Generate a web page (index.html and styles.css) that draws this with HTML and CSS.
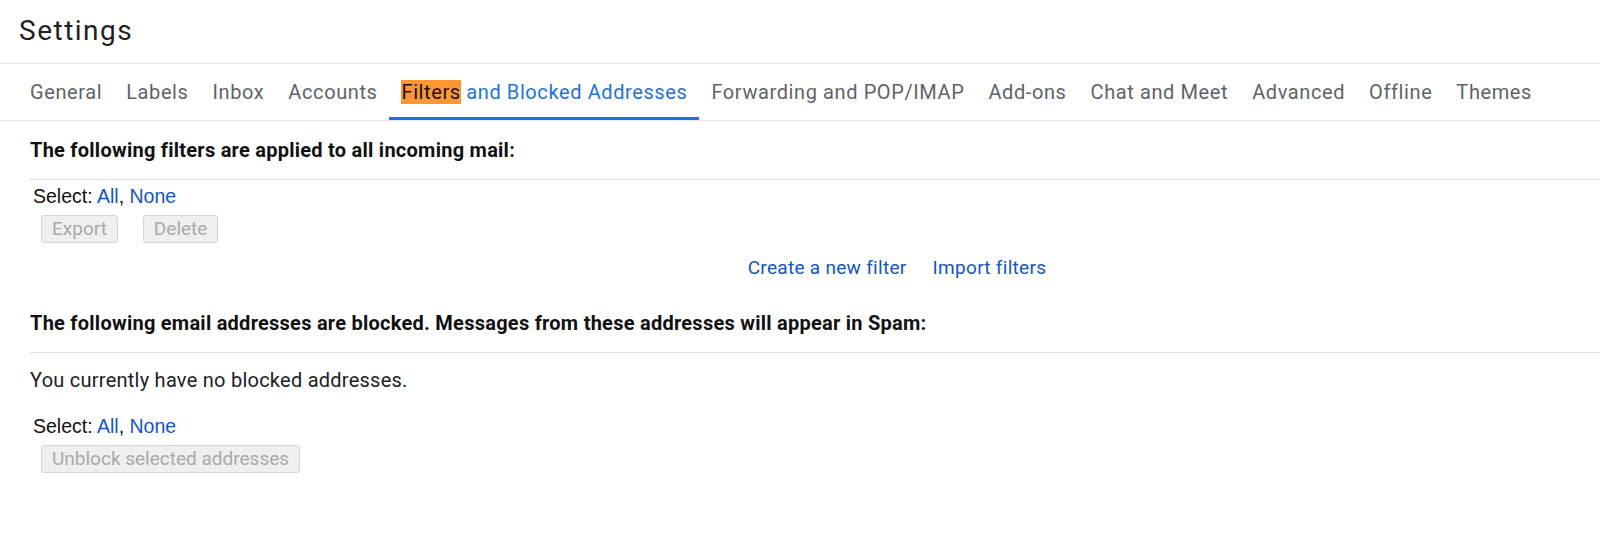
FILE: index.html
```html
<!DOCTYPE html>
<html>
<head>
<meta charset="utf-8">
<link rel="stylesheet" href="styles.css">
</head>
<body>
<div class="header"><h1 class="title">Settings</h1></div>
<nav class="tabs">
  <a class="tab"><span>General</span></a>
  <a class="tab"><span>Labels</span></a>
  <a class="tab"><span>Inbox</span></a>
  <a class="tab"><span>Accounts</span></a>
  <a class="tab active"><span><span class="hl">Filters</span> and Blocked Addresses</span></a>
  <a class="tab"><span>Forwarding and POP/IMAP</span></a>
  <a class="tab"><span>Add-ons</span></a>
  <a class="tab"><span>Chat and Meet</span></a>
  <a class="tab"><span>Advanced</span></a>
  <a class="tab"><span>Offline</span></a>
  <a class="tab"><span>Themes</span></a>
</nav>
<main class="content">
  <section class="section">
    <h2 class="heading">The following filters are applied to all incoming mail:</h2>
    <div class="select">Select: <a class="link">All</a>, <a class="link">None</a></div>
    <div class="buttons">
      <button class="btn" disabled>Export</button>
      <button class="btn" disabled>Delete</button>
    </div>
    <div class="actions">
      <a class="link">Create a new filter</a>
      <a class="link">Import filters</a>
    </div>
  </section>
  <section class="section second">
    <h2 class="heading">The following email addresses are blocked. Messages from these addresses will appear in Spam:</h2>
    <p class="note">You currently have no blocked addresses.</p>
    <div class="select">Select: <a class="link">All</a>, <a class="link">None</a></div>
    <div class="buttons">
      <button class="btn" disabled>Unblock selected addresses</button>
    </div>
  </section>
</main>
</body>
</html>
```

FILE: styles.css
```css
html, body {
  margin: 0;
  padding: 0;
  background: #fff;
}
body {
  font-family: Roboto, "Liberation Sans", sans-serif;
  color: #202124;
}
.header {
  box-sizing: content-box;
  height: 48px;
  padding: 15px 0 0 19px;
  border-bottom: 1px solid #e8e8e8;
}
.title {
  margin: 0;
  font-family: Roboto, sans-serif;
  font-weight: 400;
  font-size: 28px;
  line-height: 32px;
  letter-spacing: 1.5px;
  color: #1f1f1f;
}
.tabs {
  display: flex;
  height: 56px;
  padding-left: 18px;
  border-bottom: 1px solid #e8e8e8;
}
.tab {
  display: flex;
  align-items: center;
  padding: 3px 12px 0;
  font-size: 20px;
  letter-spacing: 0.6px;
  color: #5f6368;
  border-bottom: 3px solid transparent;
  white-space: nowrap;
}
.tab.active {
  color: #1a73e8;
  border-bottom-color: #1a73e8;
}
.hl {
  background: #ff9632;
  color: #111;
}
.content {
  padding-left: 30px;
}
.heading {
  margin: 0;
  font-size: 20px;
  font-weight: 700;
  letter-spacing: 0.25px;
  line-height: 24px;
  color: #111;
  padding: 17px 0 17px;
  border-bottom: 1px solid #e0e0e0;
}
.select {
  font-family: "Liberation Sans", Arial, sans-serif;
  font-size: 19.5px;
  line-height: 24px;
  margin: 4px 0 0 3px;
  color: #111;
}
.link {
  color: #15c;
  cursor: pointer;
}
.buttons {
  display: flex;
  gap: 25px;
  margin: 7px 0 0 11px;
}
.btn {
  font-family: Roboto, "Liberation Sans", sans-serif;
  font-size: 19px;
  height: 28px;
  line-height: 26px;
  padding: 0 10px;
  background: #efefef;
  border: 1px solid #d4d4d4;
  border-radius: 3px;
  color: #aaa;
}
.actions {
  display: flex;
  justify-content: center;
  gap: 26px;
  font-size: 19px;
  letter-spacing: 0.3px;
  line-height: 24px;
  margin-top: 13px;
  padding-left: 164px;
}
.second {
  margin-top: 14px;
}
.note {
  margin: 0;
  padding-top: 15px;
  font-size: 20px;
  letter-spacing: 0.25px;
  line-height: 24px;
  color: #202124;
}
.second .select {
  margin-top: 22px;
}
```
